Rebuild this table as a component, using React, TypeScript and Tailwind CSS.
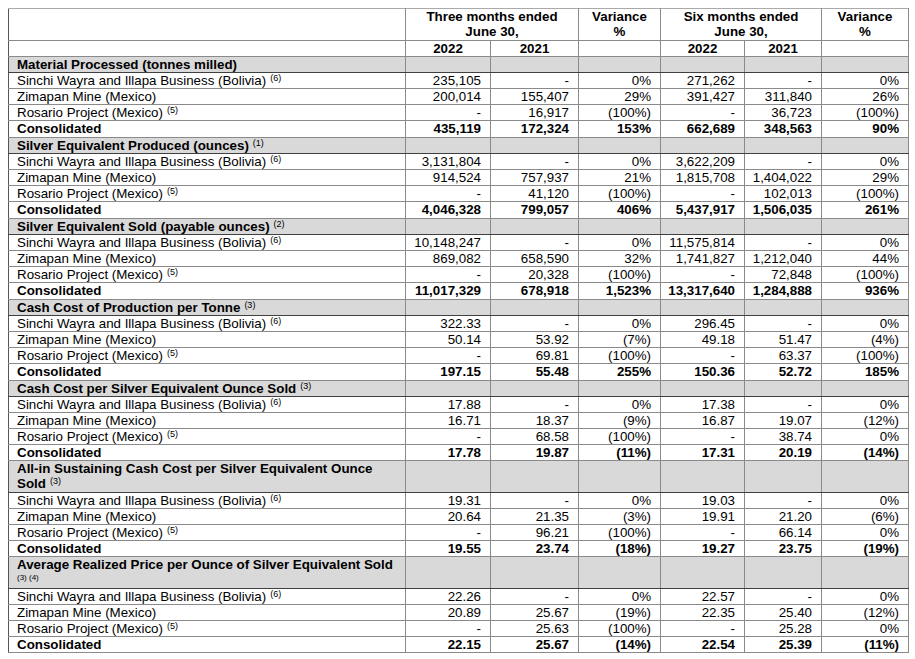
import React from "react";

type Row = { label: string; sup?: string; bold?: boolean; v: string[] };
type Section = { title: React.ReactNode; two?: boolean; tall?: boolean; rows: Row[] };

const mk = (a: string[], b: string[], c: string[], d: string[]): Row[] => [
  { label: "Sinchi Wayra and Illapa Business (Bolivia)", sup: "(6)", v: a },
  { label: "Zimapan Mine (Mexico)", v: b },
  { label: "Rosario Project (Mexico)", sup: "(5)", v: c },
  { label: "Consolidated", bold: true, v: d },
];

const Sup = ({ children }: { children: React.ReactNode }) => (
  <span className="relative -top-[4px] ml-[4px] text-[9px] leading-none font-normal">{children}</span>
);

const sections: Section[] = [
  {
    tall: true,
    title: <>Material Processed (tonnes milled)</>,
    rows: mk(
      ["235,105", "-", "0%", "271,262", "-", "0%"],
      ["200,014", "155,407", "29%", "391,427", "311,840", "26%"],
      ["-", "16,917", "(100%)", "-", "36,723", "(100%)"],
      ["435,119", "172,324", "153%", "662,689", "348,563", "90%"]
    ),
  },
  {
    tall: true,
    title: <>Silver Equivalent Produced (ounces)<Sup>(1)</Sup></>,
    rows: mk(
      ["3,131,804", "-", "0%", "3,622,209", "-", "0%"],
      ["914,524", "757,937", "21%", "1,815,708", "1,404,022", "29%"],
      ["-", "41,120", "(100%)", "-", "102,013", "(100%)"],
      ["4,046,328", "799,057", "406%", "5,437,917", "1,506,035", "261%"]
    ),
  },
  {
    tall: true,
    title: <>Silver Equivalent Sold (payable ounces)<Sup>(2)</Sup></>,
    rows: mk(
      ["10,148,247", "-", "0%", "11,575,814", "-", "0%"],
      ["869,082", "658,590", "32%", "1,741,827", "1,212,040", "44%"],
      ["-", "20,328", "(100%)", "-", "72,848", "(100%)"],
      ["11,017,329", "678,918", "1,523%", "13,317,640", "1,284,888", "936%"]
    ),
  },
  {
    tall: true,
    title: <>Cash Cost of Production per Tonne<Sup>(3)</Sup></>,
    rows: mk(
      ["322.33", "-", "0%", "296.45", "-", "0%"],
      ["50.14", "53.92", "(7%)", "49.18", "51.47", "(4%)"],
      ["-", "69.81", "(100%)", "-", "63.37", "(100%)"],
      ["197.15", "55.48", "255%", "150.36", "52.72", "185%"]
    ),
  },
  {
    title: <>Cash Cost per Silver Equivalent Ounce Sold<Sup>(3)</Sup></>,
    rows: mk(
      ["17.88", "-", "0%", "17.38", "-", "0%"],
      ["16.71", "18.37", "(9%)", "16.87", "19.07", "(12%)"],
      ["-", "68.58", "(100%)", "-", "38.74", "0%"],
      ["17.78", "19.87", "(11%)", "17.31", "20.19", "(14%)"]
    ),
  },
  {
    two: true,
    title: (
      <>
        All-in Sustaining Cash Cost per Silver Equivalent Ounce
        <br />
        Sold<Sup>(3)</Sup>
      </>
    ),
    rows: mk(
      ["19.31", "-", "0%", "19.03", "-", "0%"],
      ["20.64", "21.35", "(3%)", "19.91", "21.20", "(6%)"],
      ["-", "96.21", "(100%)", "-", "66.14", "0%"],
      ["19.55", "23.74", "(18%)", "19.27", "23.75", "(19%)"]
    ),
  },
  {
    two: true,
    title: (
      <>
        Average Realized Price per Ounce of Silver Equivalent Sold
        <br />
        <span className="relative -top-[4px] text-[8px] leading-none font-normal">(3) (4)</span>
      </>
    ),
    rows: mk(
      ["22.26", "-", "0%", "22.57", "-", "0%"],
      ["20.89", "25.67", "(19%)", "22.35", "25.40", "(12%)"],
      ["-", "25.63", "(100%)", "-", "25.28", "0%"],
      ["22.15", "25.67", "(14%)", "22.54", "25.39", "(11%)"]
    ),
  },
];

const cell = "border border-[#8a8a8a] p-0 align-top";

export default function App() {
  return (
    <div className="min-h-[659px] bg-white p-2 text-black" style={{ fontFamily: '"Liberation Sans", Arial, sans-serif' }}>
      <table className="w-[900px] table-fixed border-collapse border border-[#555] text-[13.33px] leading-[15px]">
        <colgroup>
          <col className="w-[397px]" />
          <col className="w-[85px]" />
          <col className="w-[88px]" />
          <col className="w-[82px]" />
          <col className="w-[84px]" />
          <col className="w-[77px]" />
          <col className="w-[87px]" />
        </colgroup>
        <thead>
          <tr className="font-bold">
            <td className={`${cell} border-t-[#aaa] border-l-[#555]`}>
              <div className="h-[31px]" />
            </td>
            <td colSpan={2} className={`${cell} border-t-[#aaa]`}>
              <div className="h-[31px] text-center">
                Three months ended
                <br />
                June 30,
              </div>
            </td>
            <td className={`${cell} border-t-[#aaa]`}>
              <div className="h-[31px] text-center">
                Variance
                <br />%
              </div>
            </td>
            <td colSpan={2} className={`${cell} border-t-[#aaa]`}>
              <div className="h-[31px] text-center">
                Six months ended
                <br />
                June 30,
              </div>
            </td>
            <td className={`${cell} border-t-[#aaa]`}>
              <div className="h-[31px] text-center">
                Variance
                <br />%
              </div>
            </td>
          </tr>
          <tr className="font-bold">
            <td className={`${cell} border-l-[#555]`}>
              <div className="h-[15px]" />
            </td>
            {["2022", "2021", "", "2022", "2021", ""].map((t, i) => (
              <td key={i} className={cell}>
                <div className="h-[15px] text-center">{t}</div>
              </td>
            ))}
          </tr>
        </thead>
        <tbody>
          {sections.map((s, si) => (
            <React.Fragment key={si}>
              <tr className="bg-[#d9d9d9] font-bold">
                <td className={`${cell} border-y-[#404040] border-l-[#555]`}>
                  <div className={`${s.two ? "h-[31px]" : "h-[15px]"} pl-2 whitespace-nowrap`}>{s.title}</div>
                </td>
                {[0, 1, 2, 3, 4, 5].map((i) => (
                  <td key={i} className={`${cell} border-y-[#404040]`}>
                    <div className={s.two ? "h-[31px]" : "h-[15px]"} />
                  </td>
                ))}
              </tr>
              {s.rows.map((r, ri) => {
                const h = r.bold && s.tall ? "h-[16px]" : "h-[15px]";
                return (
                  <tr key={ri} className={r.bold ? "font-bold" : ""}>
                    <td className={`${cell} border-l-[#555]`}>
                      <div className={`${h} pl-2 whitespace-nowrap`}>
                        {r.label}
                        {r.sup && <Sup>{r.sup}</Sup>}
                      </div>
                    </td>
                    {r.v.map((v, vi) => (
                      <td key={vi} className={cell}>
                        <div className={`${h} pr-[9px] text-right whitespace-nowrap`}>{v}</div>
                      </td>
                    ))}
                  </tr>
                );
              })}
            </React.Fragment>
          ))}
        </tbody>
      </table>
    </div>
  );
}
